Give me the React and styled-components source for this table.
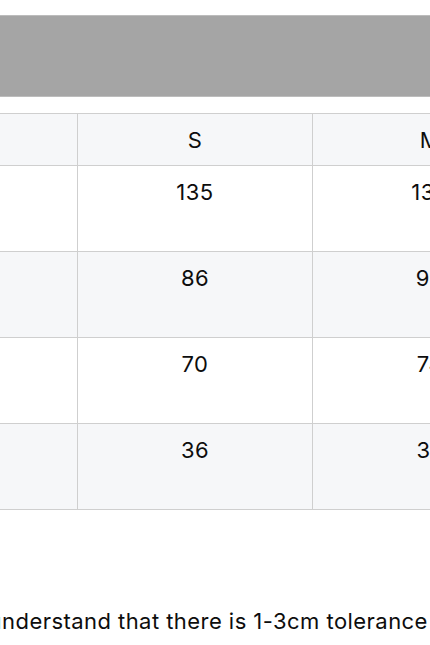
import React from 'react'
import styled, { createGlobalStyle } from 'styled-components'

const GlobalStyle = createGlobalStyle`
  html, body {
    margin: 0;
    padding: 0;
    overflow: hidden;
    background: #ffffff;
  }
  body {
    font-family: Inter, "Noto Sans", sans-serif;
    color: #111111;
  }
`

const sizes = ['S', 'M', 'L', 'XL']

const rows = [
  { label: 'Length (cm)', values: [135, 138, 141, 144] },
  { label: 'Bust (cm)', values: [86, 90, 94, 98] },
  { label: 'Waist (cm)', values: [70, 74, 78, 82] },
  { label: 'Shoulder (cm)', values: [36, 37, 38, 39] },
]

export default function App() {
  return (
    <>
      <GlobalStyle />
      <Page>
        <Content>
          <Banner />
          <SizeTable>
            <thead>
              <tr>
                <HeadCell first>Size</HeadCell>
                {sizes.map(s => <HeadCell key={ s }>{ s }</HeadCell>)}
              </tr>
            </thead>
            <tbody>
              {rows.map((row, i) => (
                <Row key={ row.label } shaded={ i % 2 === 1 }>
                  <Cell first>{ row.label }</Cell>
                  {row.values.map((v, j) => <Cell key={ j }>{ v }</Cell>)}
                </Row>
              ))}
            </tbody>
          </SizeTable>
          <Note>Please understand that there is 1-3cm tolerance due to manual measurement.</Note>
        </Content>
      </Page>
    </>
  )
}

const Page = styled.div`
  width: 430px;
  height: 645px;
  overflow: hidden;
`

const Content = styled.div`
  width: 1300px;
  margin-left: -90px;
  padding-top: 15px;
  display: flex;
  flex-direction: column;
`

const Banner = styled.div`
  height: 80px;
  background-color: #a5a5a5;
  border-top: 1px solid #bcbcbc;
  border-bottom: 1px solid #bcbcbc;
  margin-bottom: 16px;
`

const SizeTable = styled.table`
  border-collapse: collapse;
  table-layout: fixed;
  width: 1107px;
  font-size: 22px;
  letter-spacing: 0.45px;
`

const HeadCell = styled.th`
  box-sizing: border-box;
  width: ${ props => props.first ? '167px' : '235px' };
  height: 52px;
  padding: 0;
  border: 1px solid #cfcfcf;
  background-color: #f6f7f9;
  font-weight: 400;
  text-align: center;
  vertical-align: middle;
  color: ${ props => props.first ? 'transparent' : '#0d0d0d' };
`

const Row = styled.tr`
  background-color: ${ props => props.shaded ? '#f6f7f9' : '#ffffff' };
`

const Cell = styled.td`
  height: 86px;
  padding: 11px 0 0;
  box-sizing: border-box;
  border: 1px solid #cfcfcf;
  text-align: center;
  vertical-align: top;
  line-height: 31px;
  color: ${ props => props.first ? 'transparent' : '#0d0d0d' };
`

const Note = styled.p`
  margin: 96px 0 0;
  font-size: 22px;
  letter-spacing: 0.45px;
  line-height: 31px;
  white-space: nowrap;
  color: #0d0d0d;
`
